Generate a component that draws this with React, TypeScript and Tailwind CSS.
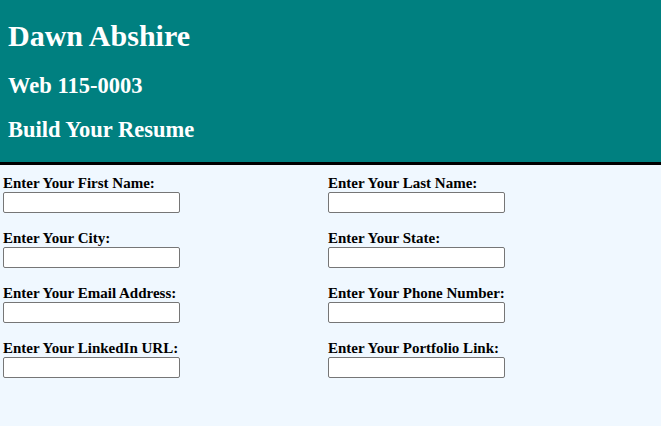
import React from 'react';

const fields: { label: string; id: string }[] = [
  { label: 'Enter Your First Name:', id: 'firstName' },
  { label: 'Enter Your Last Name:', id: 'lastName' },
  { label: 'Enter Your City:', id: 'city' },
  { label: 'Enter Your State:', id: 'state' },
  { label: 'Enter Your Email Address:', id: 'email' },
  { label: 'Enter Your Phone Number:', id: 'phone' },
  { label: 'Enter Your LinkedIn URL:', id: 'linkedin' },
  { label: 'Enter Your Portfolio Link:', id: 'portfolio' },
];

const App: React.FC = () => {
  return (
    <div className="min-h-[426px] bg-[#f0f8ff] font-['Liberation_Serif','Times_New_Roman',serif] text-black">
      {/* header */}
      <header className="h-[165px] bg-[#008080] border-b-[3px] border-black px-2 pt-[19px] text-white">
        <h1 className="text-[30px] leading-[34px] font-bold">Dawn Abshire</h1>
        <h2 className="mt-[20px] text-[22.5px] leading-[25px] font-bold">Web 115-0003</h2>
        <h2 className="mt-[19px] text-[22.5px] leading-[25px] font-bold">Build Your Resume</h2>
      </header>

      {/* form */}
      <form className="grid grid-cols-[325px_325px] gap-y-[17px] pl-[3px] pt-[10px]">
        {fields.map((f) => (
          <div key={f.id} className="flex flex-col">
            <label htmlFor={f.id} className="text-[15px] leading-[17px] font-bold">
              {f.label}
            </label>
            <input
              id={f.id}
              type="text"
              className="w-[177px] h-[21px] bg-white border border-[#767676] rounded-[2px]"
            />
          </div>
        ))}
      </form>
    </div>
  );
};

export default App;
